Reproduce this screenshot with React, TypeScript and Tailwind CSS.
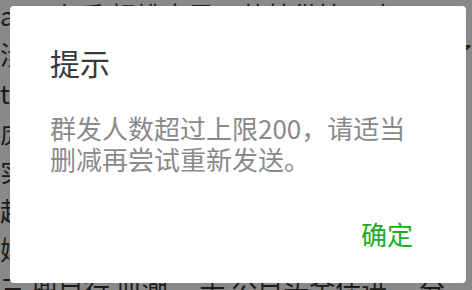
import React from 'react';

const bgLines = [
  'a    乙    上乐  相桃吉子，莱舶借管，毒',
  '涉 ，的自己的消息，在这里发送给大家了，',
  'tr 的时候都可以看到这条通知的内容啦，',
  '虎 他们说这次活动的人数实在太多了，',
  '实 朋友们也都在等待着最新的消息，',
  '起 所以大家一起来参加这次的聚会吧，',
  '嫁 我们会在群里通知具体的时间地点，',
  '三  兜目行  皿潮  二千  公目头金佳进  二分',
];

export default function App() {
  return (
    <div
      className="relative w-[472px] h-[290px] overflow-hidden bg-[#898989]"
      style={{ fontFamily: '"Noto Sans CJK SC", sans-serif' }}
    >
      <div className="mt-[-5px] flex flex-col text-[26px] leading-[39px] text-[#1c1c1c] whitespace-nowrap">
        {bgLines.map((line, i) => (
          <div key={i}>{line}</div>
        ))}
      </div>

      <div className="absolute left-[10px] top-[6px] w-[456px] h-[277px] bg-white rounded-[4px] flex flex-col pl-[40px] pr-[53px] pt-[38px]">
        <div className="text-[30px] leading-[36px] text-[#383838]">提示</div>
        <div className="mt-[32px] text-[26px] leading-[31px] text-[#8a8a8a] whitespace-nowrap">
          <div>群发人数超过上限200，请适当</div>
          <div>删减再尝试重新发送。</div>
        </div>
        <div className="mt-[44px] flex justify-end">
          <span className="text-[26px] leading-[31px] text-[#1aad19]">确定</span>
        </div>
      </div>
    </div>
  );
}
